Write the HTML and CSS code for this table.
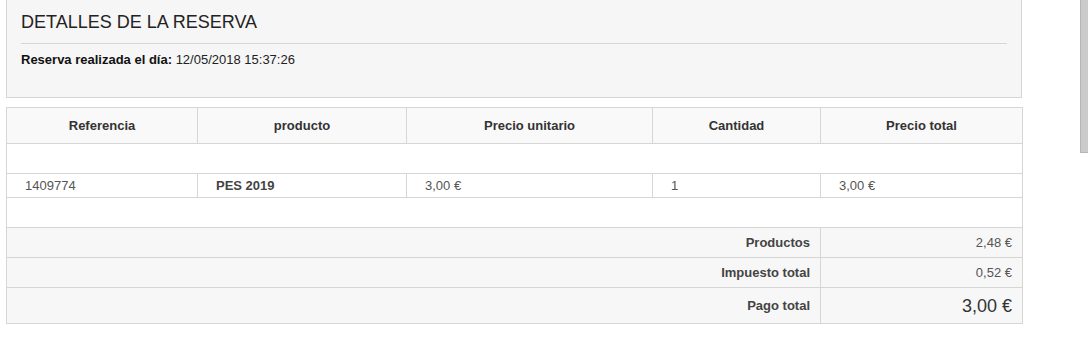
FILE: index.html
```html
<!DOCTYPE html>
<html lang="es">
<head>
<meta charset="utf-8">
<title>Detalles de la reserva</title>
<link rel="stylesheet" href="styles.css">
</head>
<body>
<div class="page">
  <section class="details">
    <h1 class="details-title">DETALLES DE LA RESERVA</h1>
    <hr class="details-rule">
    <p class="details-date"><strong>Reserva realizada el día:</strong> 12/05/2018 15:37:26</p>
  </section>

  <table class="order">
    <colgroup>
      <col class="c1"><col class="c2"><col class="c3"><col class="c4"><col class="c5">
    </colgroup>
    <thead>
      <tr class="head-row">
        <th>Referencia</th>
        <th>producto</th>
        <th>Precio unitario</th>
        <th>Cantidad</th>
        <th>Precio total</th>
      </tr>
    </thead>
    <tbody>
      <tr class="spacer-row"><td colspan="5"></td></tr>
      <tr class="item-row">
        <td>1409774</td>
        <td class="product">PES 2019</td>
        <td>3,00 €</td>
        <td>1</td>
        <td>3,00 €</td>
      </tr>
      <tr class="spacer-row"><td colspan="5"></td></tr>
      <tr class="sum-row">
        <td colspan="4" class="sum-label">Productos</td>
        <td class="sum-value">2,48 €</td>
      </tr>
      <tr class="sum-row">
        <td colspan="4" class="sum-label">Impuesto total</td>
        <td class="sum-value">0,52 €</td>
      </tr>
      <tr class="sum-row total-row">
        <td colspan="4" class="sum-label">Pago total</td>
        <td class="sum-value big">3,00 €</td>
      </tr>
    </tbody>
  </table>
</div>
<div class="scroll-thumb"></div>
</body>
</html>
```

FILE: styles.css
```css
html, body {
  margin: 0;
  padding: 0;
  background: #ffffff;
}

body {
  font-family: "Liberation Sans", Arial, sans-serif;
  font-size: 13px;
  color: #555555;
  position: relative;
  min-height: 346px;
}

.page {
  width: 1016px;
  margin-left: 6px;
}

.details {
  background: #f6f6f6;
  border: 1px solid #d6d6d6;
  border-top: 0;
  height: 85px;
  padding: 12px 14px 0;
  box-sizing: content-box;
}

.details-title {
  margin: 0;
  font-size: 18px;
  line-height: 20px;
  font-weight: normal;
  color: #222222;
}

.details-rule {
  margin: 11px 0 0;
  border: 0;
  height: 1px;
  background: #d6d6d6;
}

.details-date {
  margin: 7px 0 0;
  line-height: 17px;
  color: #222222;
}

.details-date strong {
  color: #111111;
}

.order {
  margin-top: 9px;
  width: 1016px;
  border-collapse: collapse;
  table-layout: fixed;
  border: 1px solid #d6d6d6;
}

.c1 { width: 191px; }
.c2 { width: 209px; }
.c3 { width: 246px; }
.c4 { width: 168px; }
.c5 { width: 202px; }

.order th,
.order td {
  border: 1px solid #d6d6d6;
  padding: 0;
  vertical-align: middle;
  line-height: 16px;
}

.head-row th {
  background: #f9f9f9;
  height: 35px;
  text-align: center;
  font-weight: bold;
  color: #333333;
}

.spacer-row td {
  height: 29px;
  background: #ffffff;
}

.item-row td {
  height: 23px;
  padding-left: 18px;
  text-align: left;
  color: #555555;
}

.item-row .product {
  font-weight: bold;
  color: #444444;
}

.sum-row td {
  background: #f7f7f7;
  height: 29px;
  text-align: right;
  padding-right: 10px;
}

.sum-label {
  font-weight: bold;
  color: #444444;
}

.sum-value {
  color: #555555;
}

.total-row td {
  height: 35px;
}

.sum-value.big {
  font-size: 18px;
  color: #333333;
}

.scroll-thumb {
  position: absolute;
  top: 0;
  left: 1080px;
  width: 7px;
  height: 152px;
  background: #cbcbcb;
  border-left: 1px solid #b5b5b5;
  border-bottom: 1px solid #b5b5b5;
}
```
